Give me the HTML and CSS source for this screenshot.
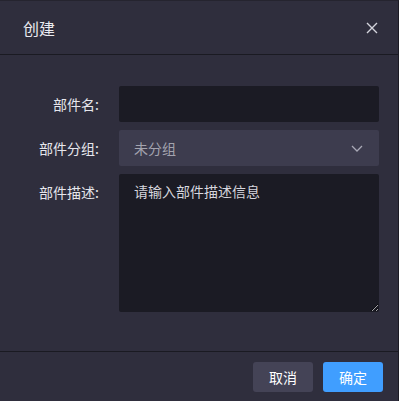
FILE: index.html
```html
<!DOCTYPE html>
<html>
<head>
  <meta charset="utf-8">
  <title>创建</title>
  <link rel="stylesheet" href="styles.css">
</head>
<body>
  <div class="dialog">
    <header class="dialog-header">
      <span class="dialog-title">创建</span>
      <button class="close-btn" aria-label="关闭">
        <svg width="12" height="12" viewBox="0 0 12 12">
          <path d="M1 1 L11 11 M11 1 L1 11" stroke="#d4d4dc" stroke-width="1.4" fill="none"/>
        </svg>
      </button>
    </header>

    <div class="dialog-body">
      <form class="form">
        <label class="form-label">部件名:</label>
        <input class="form-input" type="text">

        <label class="form-label">部件分组:</label>
        <div class="form-select">
          <span>未分组</span>
          <svg width="12" height="7" viewBox="0 0 12 7">
            <path d="M1 1 L6 6 L11 1" stroke="#a9a9b6" stroke-width="1.3" fill="none"/>
          </svg>
        </div>

        <label class="form-label">部件描述:</label>
        <textarea class="form-textarea" placeholder="请输入部件描述信息"></textarea>
      </form>
    </div>

    <footer class="dialog-footer">
      <button class="btn btn-cancel">取消</button>
      <button class="btn btn-primary">确定</button>
    </footer>
  </div>
</body>
</html>
```

FILE: styles.css
```css
body {
  margin: 0;
  background: #2f2e3d;
  font-family: "Noto Sans CJK SC", "Noto Sans", sans-serif;
  font-size: 14px;
  color: #e4e4ea;
}
.dialog {
  width: 399px;
  height: 401px;
  box-sizing: border-box;
  border-top: 1px solid #25242f;
  border-right: 1px solid #1c1b24;
  background: #2f2e3d;
  display: flex;
  flex-direction: column;
}
.dialog-header {
  height: 53px;
  border-bottom: 1px solid #1a1a22;
  display: flex;
  align-items: center;
  justify-content: space-between;
  padding: 0 20px 0 23px;
}
.dialog-title {
  font-size: 16px;
  color: #eaeaf0;
}
.close-btn {
  background: none;
  border: none;
  padding: 0;
  width: 12px;
  height: 12px;
  display: flex;
  cursor: pointer;
}
.dialog-body {
  flex: 1;
  padding: 31px 0 0 0;
}
.form {
  display: grid;
  grid-template-columns: 99px 260px;
  column-gap: 20px;
  row-gap: 8px;
  margin: 0;
}
.form-label {
  text-align: right;
  line-height: 36px;
  color: #e6e6ec;
}
.form-input {
  height: 36px;
  box-sizing: border-box;
  border: none;
  border-radius: 2px;
  background: #1b1b24;
  outline: none;
  padding: 0 15px;
  color: #e4e4ea;
  font: inherit;
}
.form-select {
  height: 36px;
  box-sizing: border-box;
  background: #3d3c4e;
  border-radius: 2px;
  padding: 0 16px 0 15px;
  display: flex;
  align-items: center;
  justify-content: space-between;
  color: #a3a3ae;
}
.form-textarea {
  height: 138px;
  box-sizing: border-box;
  border: none;
  border-radius: 2px;
  background: #1b1b24;
  outline: none;
  padding: 6px 15px;
  color: #e4e4ea;
  font: inherit;
  line-height: 22px;
  resize: vertical;
  color-scheme: dark;
}
.form-textarea::placeholder {
  color: #d6d6de;
}
.dialog-footer {
  height: 50px;
  box-sizing: border-box;
  border-top: 1px solid #1a1a22;
  display: flex;
  justify-content: flex-end;
  align-items: center;
  gap: 10px;
  padding: 0 15px 0 0;
}
.btn {
  width: 60px;
  height: 30px;
  border: none;
  border-radius: 3px;
  font: inherit;
  font-size: 14px;
  color: #ffffff;
  cursor: pointer;
}
.btn-cancel {
  background: #444356;
}
.btn-primary {
  background: #409eff;
}
```
